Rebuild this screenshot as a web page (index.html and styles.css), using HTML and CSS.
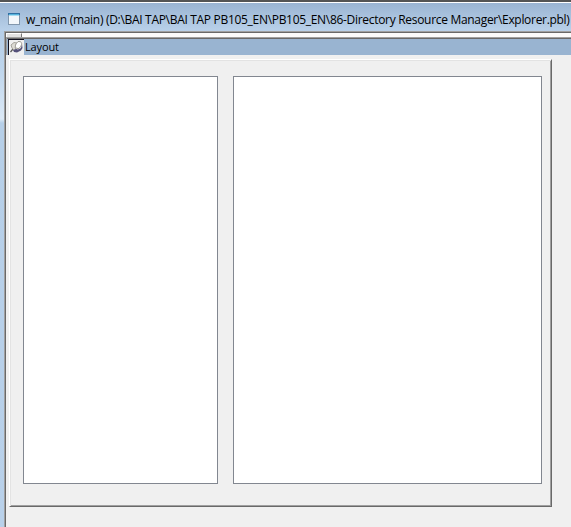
FILE: index.html
```html
<!DOCTYPE html>
<html lang="en">
<head>
<meta charset="utf-8">
<title>w_main</title>
<link rel="stylesheet" href="styles.css">
</head>
<body>
<div class="window">
  <header class="titlebar">
    <svg class="window-icon" width="12" height="12" viewBox="0 0 12 12" shape-rendering="crispEdges">
      <rect width="12" height="12" fill="#8297ad"/>
      <rect width="12" height="2" fill="#2f70a4"/>
      <rect x="1" y="1" width="10" height="1" fill="#56b4dd"/>
      <rect x="1" y="2" width="10" height="1" fill="#a9dcf2"/>
      <rect x="1" y="3" width="10" height="8" fill="#f3f7fb"/>
    </svg>
    <span class="title">w_main (main) (D:\BAI TAP\BAI TAP PB105_EN\PB105_EN\86-Directory Resource Manager\Explorer.pbl)</span>
  </header>
  <main class="client">
    <div class="ruler"><div class="ruler-tab"></div></div>
    <div class="view-bar">
      <div class="pin">
        <svg width="15" height="15" viewBox="0 0 15 15">
          <path d="M1.5 12 L4 9" stroke="#555" stroke-width="1.2"/>
          <path d="M2 5 L5 2.5 L8 3 L6 8 L8 10 L5 10.5 L3 8Z" fill="#dddbd4" stroke="#96938a" stroke-width=".8"/>
          <path d="M4 10 L7 9 L9 9.5 L12 8 L13 4 L13.5 8 L12 10.5 L8 12.5 L5 12Z" fill="#545079"/>
          <ellipse cx="9.5" cy="5" rx="2.7" ry="3.8" transform="rotate(28 9.5 5)" fill="#fff" stroke="#8f8c85" stroke-width=".8"/>
        </svg>
      </div>
      <span class="view-name">Layout</span>
    </div>
    <div class="canvas">
      <div class="form">
        <div class="control tree"></div>
        <div class="control list"></div>
      </div>
    </div>
  </main>
</div>
</body>
</html>
```
FILE: styles.css
```css
* { box-sizing: border-box; }
body {
  margin: 0;
  overflow: hidden;
  font-family: "Segoe UI", "Open Sans", "Noto Sans", sans-serif;
  color: #000;
}
.window {
  width: 571px;
  height: 527px;
  display: flex;
  flex-direction: column;
  padding-left: 4px;
  border-top: 2px solid #545454;
  background: linear-gradient(#9ab5d3 0, #b7cfe8 29px, #bdd5ec 65px, #dce9f6 117px, #b6cfe8 121px, #b9d1ea 100%);
}
.titlebar {
  height: 29px;
  flex: none;
  margin-left: -4px;
  padding: 1px 0 0 8px;
  display: flex;
  align-items: center;
  gap: 6px;
  border-top: 1px solid #fff;
  background: linear-gradient(#9ab4d2, #b9d1ea);
  white-space: nowrap;
}
.window-icon { flex: none; margin-top: 2px; }
.title {
  font-size: 12px;
  line-height: 18px;
  margin-top: 5px;
  letter-spacing: -0.305px;
}
.client {
  flex: 1;
  display: flex;
  flex-direction: column;
  border-left: 1px solid #a0a0a0;
  border-top: 1px solid #a0a0a0;
  box-shadow: inset 1px 1px #696969;
  padding: 1px 0 0 1px;
  background-color: #f0f0f0;
}
.ruler {
  height: 4px;
  flex: none;
  background: #fbfbfb;
}
.ruler-tab {
  width: 16px;
  height: 4px;
  background: #e2e2e2;
  border: solid #fff;
  border-width: 1px 0 0 1px;
  border-right: 1px solid #777;
}
.view-bar {
  height: 18px;
  flex: none;
  display: flex;
  align-items: center;
  border-top: 1px solid #a0a0a0;
  border-left: 1px solid #a0a0a0;
  box-shadow: inset 0 1px #696969;
  padding: 1px 0 0 1px;
  background: #99b4d1;
}
.pin {
  width: 16px;
  height: 16px;
  border: solid #101020;
  border-width: 1px 0 0 1px;
  background: #f0f0f0;
}
.pin svg { display: block; }
.view-name {
  margin-left: 1px;
  font-size: 11px;
  line-height: 16px;
  letter-spacing: -0.15px;
}
.canvas {
  flex: 1;
  padding: 4px 0 0 3px;
  background: #f0f0f0;
}
.form {
  width: 543px;
  height: 448px;
  display: flex;
  gap: 15px;
  padding: 16px 8px 22px 13px;
  border: 1px solid;
  border-color: #fff #696969 #696969 #fff;
  box-shadow: inset 1px 1px #e3e3e3, inset -1px -1px #a0a0a0;
}
.control {
  height: 408px;
  background: #fff;
  border: 1px solid #828790;
}
.tree { width: 195px; flex: none; }
.list { width: 309px; flex: none; }
```
